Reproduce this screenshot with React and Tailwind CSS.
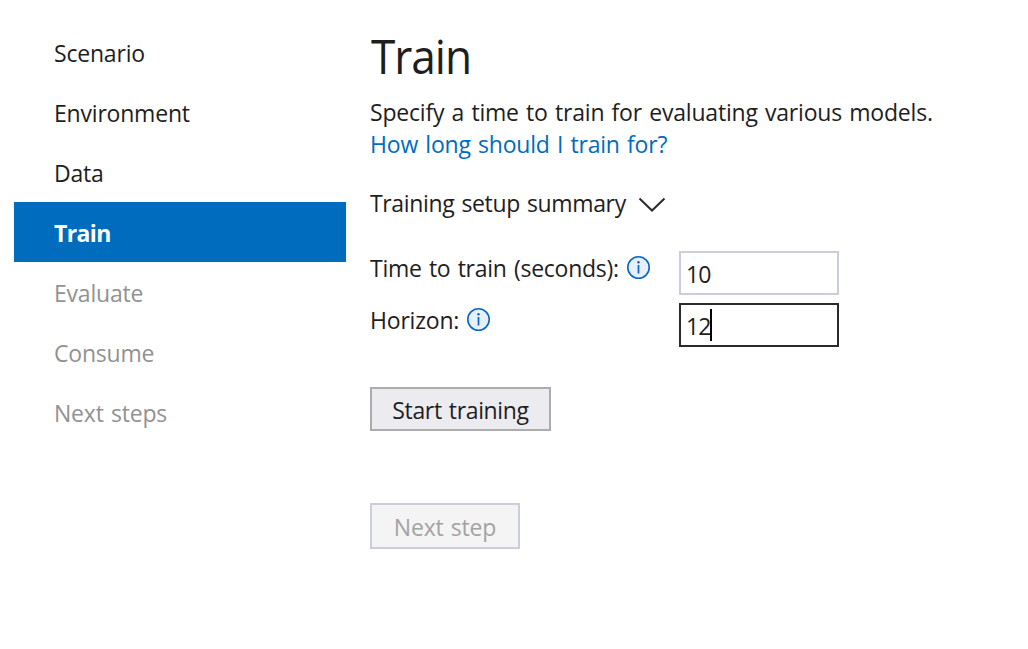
const steps = [
  { name: 'Scenario' },
  { name: 'Environment' },
  { name: 'Data' },
  { name: 'Train', state: 'current' },
  { name: 'Evaluate', state: 'pending' },
  { name: 'Consume', state: 'pending' },
  { name: 'Next steps', state: 'pending' },
];

const tone = {
  current: 'bg-[#006cbe] font-bold tracking-[-0.6px] text-white',
  pending: 'text-[#929292]',
};

function Info() {
  return (
    <svg width="23" height="23" viewBox="0 0 23 23" className="shrink-0">
      <circle cx="11.5" cy="11.5" r="10.7" fill="#e6effa" stroke="#0a66c2" strokeWidth="1.6" />
      <path d="M11.5 9v8.5" stroke="#0a66c2" strokeWidth="1.7" />
      <circle cx="11.5" cy="6.2" r="1.2" fill="#0a66c2" />
    </svg>
  );
}

export default function App() {
  return (
    <div className="flex h-[649px] w-full overflow-hidden bg-white font-['Open_Sans','Noto_Sans',sans-serif] text-[23px] leading-8 tracking-[-0.2px] text-[#1e1e1e] [word-spacing:1.5px]">
      <nav className="ml-[14px] mt-[22px] w-[332px] shrink-0">
        {steps.map(({ name, state }) => (
          <div key={name} className={`flex h-[60px] items-center pt-[2px] pl-10 ${tone[state] ?? ''}`}>{name}</div>
        ))}
      </nav>
      <main className="ml-6 pt-[31px]">
        <h1 className="w-fit origin-left scale-x-[0.94] pl-px text-[47px] leading-[50px] tracking-[-1.1px]">Train</h1>
        <p className="mt-[15px] whitespace-nowrap">Specify a time to train for evaluating various models.</p>
        <a href="#" className="block w-fit text-[#006cbe]">How long should I train for?</a>
        <button className="mt-[27px] flex items-center tracking-[-0.36px] [word-spacing:1.5px]">
          Training setup summary
          <svg width="28" height="16" viewBox="0 0 28 16" fill="none" className="mt-1 ml-3">
            <path d="M1.5 1.5 14 13.5 26.5 1.5" stroke="#2b2b2b" strokeWidth="2" />
          </svg>
        </button>
        <div className="mt-8 grid grid-cols-[309px_160px] gap-y-2">
          <div className="flex h-[44px] items-start gap-2 pt-px">
            <label className="tracking-[-0.25px]">Time to train (seconds):</label>
            <div className="pt-1"><Info /></div>
          </div>
          <div className="flex h-[44px] items-center border-2 border-[#cccddc] pt-px pl-[5px] tracking-[-0.8px]">10</div>
          <div className="flex h-[44px] items-start gap-2 pt-px">
            <label>Horizon:</label>
            <div className="pt-1"><Info /></div>
          </div>
          <div className="flex h-[44px] items-center border-2 border-[#2b2b2b] pl-[5px]">
            <span className="w-6 pt-px tracking-[-0.8px]">12</span>
            <span className="h-8 w-[2px] bg-black" />
          </div>
        </div>
        <button className="mt-10 flex h-[44px] w-[181px] items-center justify-center border-2 border-[#acacac] bg-[#ecebf0] pt-px tracking-[-0.36px] [word-spacing:1.5px]">Start training</button>
        <button disabled className="mt-[72px] flex h-[46px] w-[150px] items-center justify-center border-2 border-[#cccddc] bg-[#f4f4f4] pt-px text-[#a3a3a3] [word-spacing:1.5px]">Next step</button>
      </main>
    </div>
  );
}
